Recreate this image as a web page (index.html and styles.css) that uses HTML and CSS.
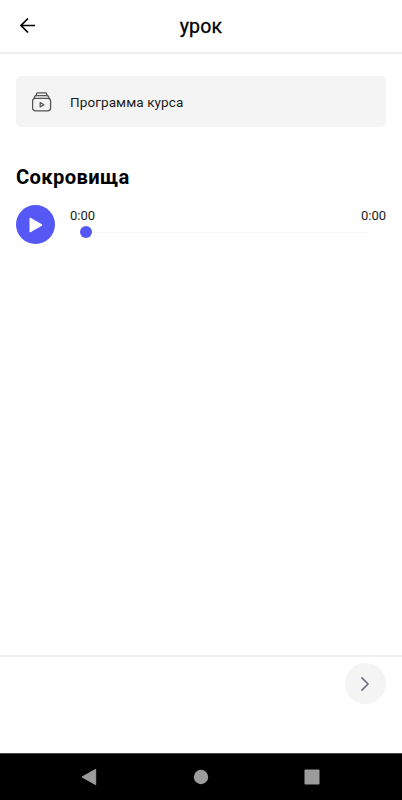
FILE: index.html
```
<!DOCTYPE html>
<html lang="ru">
<head>
    <meta charset="UTF-8">
    <meta name="viewport" content="width=device-width, initial-scale=1.0">
    <title>урок</title>
    <link rel="stylesheet" href="styles.css">
</head>
<body>
    <div class="screen">
        <!-- Header -->
        <header class="header">
            <button class="back" aria-label="Назад">
                <svg width="16" height="16" viewBox="0 0 16 16" fill="none" stroke="#000" stroke-width="1.7">
                    <path d="M15 7.5H1.2M8 .5L1 7.5l7 7"/>
                </svg>
            </button>
            <h1 class="title">урок</h1>
        </header>

        <!-- Lesson -->
        <main class="content">
            <button class="program">
                <svg width="20" height="20" viewBox="0 0 20 20" fill="none" stroke="#555" stroke-width="1.3" stroke-linejoin="round" stroke-linecap="round">
                    <rect x=".6" y="6.3" width="18" height="12.5" rx="2.8"/>
                    <path d="M2.1 6.3l.7-1.9c.2-.5.6-.8 1.2-.8h11.2c.6 0 1 .3 1.2.8l.7 1.9"/>
                    <path d="M4.1 3.5l.5-1.7c.2-.6.5-.9 1.1-.9h7.8c.6 0 .9.3 1.1.9l.5 1.7"/>
                    <path d="M8.2 10.6v4.4l3.7-2.2z"/>
                </svg>
                <span>Программа курса</span>
            </button>

            <h2 class="lesson-name">Сокровища</h2>

            <div class="player">
                <button class="play" aria-label="Играть">
                    <svg width="14" height="16" viewBox="0 0 14 16" fill="#fff">
                        <path d="M.5 1.7v12.6c0 .8.8 1.2 1.5.8L12.8 8.8c.6-.4.6-1.2 0-1.6L2 .9C1.3.5.5.9.5 1.7z"/>
                    </svg>
                </button>
                <div class="progress">
                    <div class="times">
                        <span>0:00</span>
                        <span>0:00</span>
                    </div>
                    <div class="track">
                        <div class="knob"></div>
                        <div class="line"></div>
                    </div>
                </div>
            </div>
        </main>

        <!-- Next lesson -->
        <footer class="footer">
            <button class="next" aria-label="Далее">
                <svg width="10" height="16" viewBox="0 0 10 16" fill="none" stroke="#6b6b7e" stroke-width="1.5">
                    <path d="M1.5 1.4L8 8l-6.5 6.6"/>
                </svg>
            </button>
        </footer>

        <!-- System navigation -->
        <nav class="system-bar">
            <svg width="16" height="18" viewBox="0 0 16 18" fill="#9c9c9c">
                <path d="M14.7 1.3v15.4L1 9z" stroke="#9c9c9c" stroke-linejoin="round"/>
            </svg>
            <svg width="16" height="16" viewBox="0 0 16 16" fill="#9c9c9c">
                <circle cx="8" cy="8" r="7.2"/>
            </svg>
            <svg width="16" height="16" viewBox="0 0 16 16" fill="#9c9c9c">
                <rect x=".5" y=".5" width="15" height="15" rx="1"/>
            </svg>
        </nav>
    </div>
</body>
</html>
```
FILE: styles.css
```
* {
    box-sizing: border-box;
}

body {
    margin: 0;
    font-family: Roboto, "Noto Sans", sans-serif;
    color: #000;
    background-color: #fff;
}

button {
    border: none;
    padding: 0;
    font-family: inherit;
    color: inherit;
    cursor: pointer;
}

svg {
    display: block;
    flex-shrink: 0;
}

.screen {
    display: flex;
    flex-direction: column;
    height: 100vh;
}

/* Header */
.header {
    display: grid;
    grid-template-columns: 56px 1fr 56px;
    align-items: center;
    height: 54px;
    border-bottom: 2px solid #eee;
}

.back {
    display: flex;
    padding-left: 20px;
    padding-bottom: 1px;
    background: none;
}

.title {
    margin: 0;
    font-size: 19.5px;
    font-weight: 400;
    letter-spacing: 0.2px;
    text-align: center;
    -webkit-text-stroke: 0.3px #000;
}

/* Lesson */
.content {
    flex: 1;
    padding: 22px 16px 0;
}

.program {
    display: flex;
    align-items: center;
    gap: 18px;
    width: 100%;
    height: 51px;
    padding-left: 16px;
    border-radius: 5px;
    background-color: #f4f4f4;
    font-size: 13.5px;
    font-weight: 400;
    letter-spacing: 0.1px;
    color: #1c1c1c;
}

.lesson-name {
    margin: 38px 0 0;
    font-size: 20.2px;
    line-height: 25px;
    font-weight: 700;
    letter-spacing: 0.35px;
}

.player {
    display: flex;
    gap: 15px;
    margin-top: 15px;
}

.play {
    display: flex;
    align-items: center;
    justify-content: center;
    width: 39px;
    height: 39px;
    padding-left: 1px;
    border-radius: 50%;
    background-color: #5558f5;
}

.progress {
    flex: 1;
    padding-top: 3px;
}

.times {
    display: flex;
    justify-content: space-between;
    font-size: 13px;
    font-weight: 400;
    line-height: 16px;
    color: #1c1c1c;
}

.track {
    display: flex;
    align-items: center;
    height: 12px;
    margin-top: 2px;
    padding: 0 17px 0 10px;
}

.knob {
    width: 12px;
    height: 12px;
    border-radius: 50%;
    background-color: #5558f5;
}

.line {
    flex: 1;
    height: 1px;
    background-color: #f7f7fe;
}

/* Footer */
.footer {
    display: flex;
    justify-content: flex-end;
    height: 98px;
    padding: 6px 16px 0;
    border-top: 2px solid #f0f0f0;
}

.next {
    display: flex;
    align-items: center;
    justify-content: center;
    width: 41px;
    height: 41px;
    padding-right: 1px;
    border-radius: 50%;
    background-color: #f4f4f4;
}

/* System navigation */
.system-bar {
    display: flex;
    align-items: center;
    justify-content: space-between;
    height: 47px;
    padding: 0 82px 0 81px;
    border-top: 1px solid #444;
    background-color: #000;
}
```
